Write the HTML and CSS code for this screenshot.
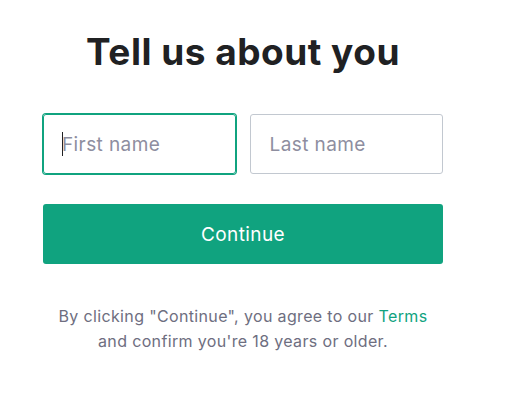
FILE: index.html
```html
<!DOCTYPE html>
<html>
<head>
<meta charset="utf-8">
<link rel="stylesheet" href="styles.css">
</head>
<body>
<main class="page">
  <h1 class="title">Tell us about you</h1>
  <div class="names">
    <div class="field focused"><span class="caret"></span><span class="ph">First name</span></div>
    <div class="field"><span class="ph">Last name</span></div>
  </div>
  <button class="continue">Continue</button>
  <p class="legal">By clicking "Continue", you agree to our <a class="terms">Terms</a><br>and confirm you're 18 years or older.</p>
</main>
</body>
</html>
```
FILE: styles.css
```css
html, body { margin: 0; background: #fff; }
body { font-family: Inter, "Noto Sans", sans-serif; }
.page {
  width: 400px;
  padding: 30px 0 0 43px;
  display: flex;
  flex-direction: column;
}
.title {
  margin: 0;
  text-align: center;
  font-size: 37px;
  line-height: 44px;
  font-weight: 700;
  color: #202123;
  letter-spacing: 0.5px;
}
.names {
  display: flex;
  gap: 14px;
  margin-top: 40px;
}
.field {
  flex: 1;
  height: 58px;
  border: 1px solid #c2c8d0;
  border-radius: 3px;
  display: flex;
  align-items: center;
  padding-left: 19px;
  font-size: 19px;
  letter-spacing: 0.4px;
  color: #8e8ea0;
}
.field.focused {
  padding-left: 18px;
  border-color: #10a37f;
  box-shadow: 0 0 0 1px #10a37f;
}
.caret {
  width: 1px;
  height: 24px;
  background: #202123;
  margin-right: -1px;
}
.continue {
  margin-top: 30px;
  height: 60px;
  border: none;
  border-radius: 3px;
  background: #10a37f;
  color: #fff;
  font-family: inherit;
  font-size: 19px;
  letter-spacing: 0.4px;
  padding: 0;
}
.legal {
  margin: 40px 0 0;
  text-align: center;
  font-size: 16px;
  line-height: 25px;
  letter-spacing: 0.35px;
  color: #6e6e80;
}
.terms { color: #10a37f; text-decoration: none; }
```
